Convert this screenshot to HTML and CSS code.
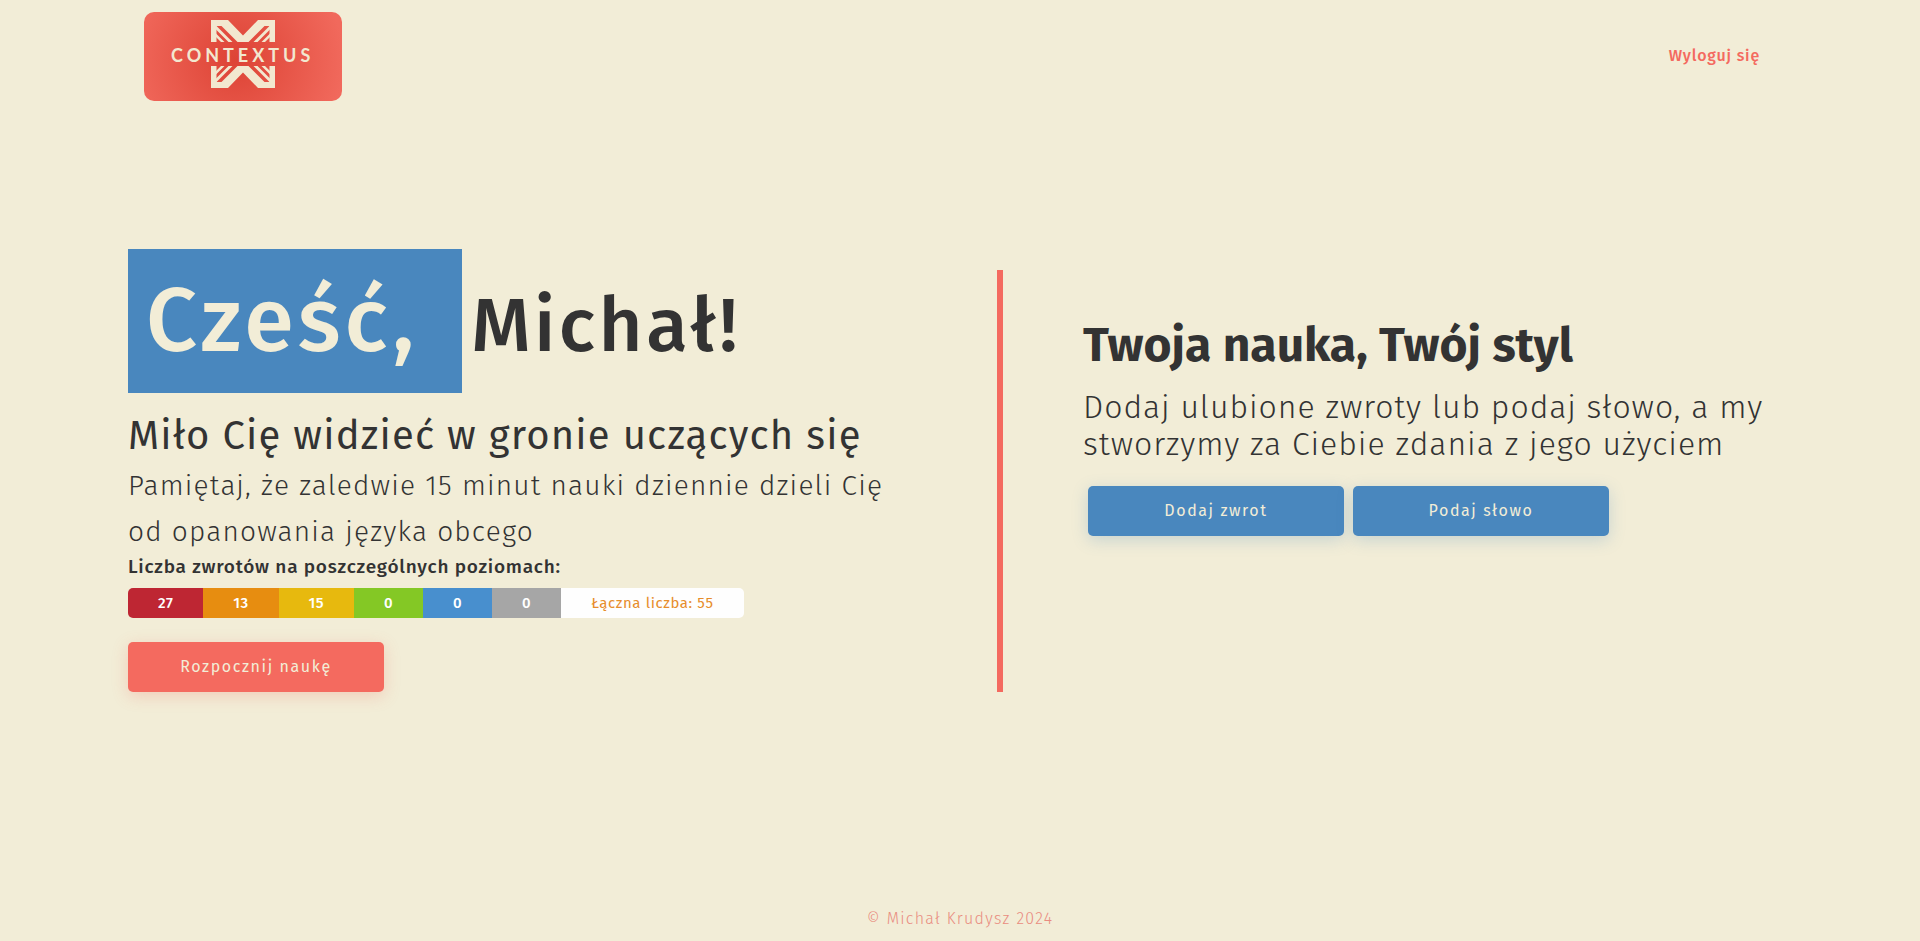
FILE: index.html
```html
<!DOCTYPE html>
<html lang="pl">
<head>
<meta charset="utf-8">
<meta name="viewport" content="width=device-width, initial-scale=1">
<title>Contextus</title>
<link rel="stylesheet" href="styles.css">
</head>
<body>
<header class="header">
  <a class="logo" href="#" aria-label="Contextus">
    <svg width="198" height="89" viewBox="0 0 198 89" aria-hidden="true">
      <defs>
        <radialGradient id="glow" gradientUnits="userSpaceOnUse" cx="92" cy="48" r="108">
          <stop offset="0" stop-color="#dd4335"/>
          <stop offset="1" stop-color="#f1695c"/>
        </radialGradient>
        <g id="half">
          <path d="M67 8H84L99 23.500V30H93.500L77.500 14H72.500V30H67Z"/>
          <path d="M72 13.500L88.500 30H84.500L72 17.500ZM72 21.500L80.500 30H77L72 25Z"/>
        </g>
        <g id="mark">
          <use href="#half"/>
          <use href="#half" transform="translate(198 0) scale(-1 1)"/>
        </g>
      </defs>
      <rect width="198" height="89" rx="10" fill="url(#glow)"/>
      <g fill="#f2e8d0">
        <use href="#mark"/>
        <use href="#mark" transform="translate(0 84) scale(1 -1)"/>
        <text class="logo-text" x="27" y="50">CONTEXTUS</text>
      </g>
    </svg>
  </a>
  <nav><a class="nav-link" href="#">Wyloguj się</a></nav>
</header>
<main class="main">
  <section class="welcome">
    <h1 class="greeting"><span class="hello">Cześć,</span><span>Michał!</span></h1>
    <h2 class="lead">Miło Cię widzieć w gronie uczących się</h2>
    <p class="reminder">Pamiętaj, że zaledwie 15 minut nauki dziennie dzieli Cię od opanowania języka obcego</p>
    <p class="levels-title">Liczba zwrotów na poszczególnych poziomach:</p>
    <ul class="levels">
      <li class="level level-1">27</li>
      <li class="level level-2">13</li>
      <li class="level level-3">15</li>
      <li class="level level-4">0</li>
      <li class="level level-5">0</li>
      <li class="level level-6">0</li>
      <li class="level total">Łączna liczba: 55</li>
    </ul>
    <button class="button button-coral" type="button">Rozpocznij naukę</button>
  </section>
  <section class="learning">
    <h2 class="style-title">Twoja nauka, Twój styl</h2>
    <p class="style-text">Dodaj ulubione zwroty lub podaj słowo, a my stworzymy za Ciebie zdania z jego użyciem</p>
    <div class="actions">
      <button class="button button-blue" type="button">Dodaj zwrot</button>
      <button class="button button-blue" type="button">Podaj słowo</button>
    </div>
  </section>
</main>
<footer class="footer">© Michał Krudysz 2024</footer>
</body>
</html>
```
FILE: styles.css
```css
* {
  box-sizing: border-box;
  margin: 0;
  padding: 0;
}

body {
  display: flex;
  flex-direction: column;
  min-height: 100vh;
  padding: 0 128px;
  background: #f2edd7;
  color: #333;
  font-family: "Fira Sans", "Open Sans", "Noto Sans", sans-serif;
  font-size: 16px;
}

.header {
  display: flex;
  align-items: center;
  justify-content: space-between;
  padding: 12px 16px 0;
}

.logo,
.logo svg {
  display: block;
}

.logo-text {
  font-family: Lato, sans-serif;
  font-size: 18px;
  font-weight: 700;
  letter-spacing: 4px;
}

.nav-link {
  display: block;
  padding: 0 16px 2px;
  color: #f46a5f;
  font-weight: 500;
  letter-spacing: 0.05em;
  text-decoration: none;
}

.main {
  display: grid;
  grid-template-columns: 875fr 789fr;
  flex: 1;
  align-items: start;
  padding-top: 169px;
}

.welcome {
  border-right: 6px solid #f46a5f;
}

.greeting {
  display: flex;
  align-items: baseline;
  gap: 9px;
  margin-top: -21px;
  font-size: 76px;
  font-weight: 500;
  letter-spacing: 0.045em;
  white-space: nowrap;
}

.hello {
  padding: 0 44px 0 18px;
  background: #4987be;
  color: #f2edd7;
  font-size: 90px;
  letter-spacing: 4px;
  line-height: 144px;
}

.lead {
  margin-top: 16px;
  font-size: 40px;
  font-weight: 400;
  letter-spacing: 0.03em;
  line-height: 54px;
}

.reminder {
  max-width: 780px;
  font-size: 28px;
  font-weight: 300;
  letter-spacing: 0.043em;
  line-height: 46px;
}

.levels-title {
  font-size: 19px;
  font-weight: 500;
  letter-spacing: 0.04em;
  line-height: 24px;
}

.levels {
  display: flex;
  width: fit-content;
  margin-top: 9px;
  overflow: hidden;
  border-radius: 5px;
  list-style: none;
}

.level {
  padding: 0 30px;
  color: #fff;
  font-size: 15px;
  font-weight: 500;
  letter-spacing: 0.03em;
  line-height: 30px;
  text-align: center;
}

.level-1 { background: #be2633; }
.level-2 { background: #e78d10; }
.level-3 { background: #e7b90e; }
.level-4 { background: #84c825; }
.level-5 { background: #488fce; }
.level-6 { background: #a6a6a6; }

.total {
  background: #fefefe;
  color: #e78d2b;
  font-weight: 400;
  letter-spacing: 0.04em;
}

.button {
  width: 256px;
  height: 50px;
  padding-bottom: 2px;
  border: 0;
  border-radius: 5px;
  color: #f2edd7;
  font: inherit;
  letter-spacing: 0.1em;
  cursor: pointer;
}

.button-coral {
  display: block;
  margin-top: 24px;
  background: #f46a5f;
  box-shadow: 0 4px 16px rgba(244, 106, 95, 0.25);
}

.button-blue {
  background: #4987be;
  box-shadow: 0 4px 16px rgba(73, 135, 190, 0.25);
}

.learning {
  padding: 45px 0 0 80px;
}

.style-title {
  font-size: 48px;
  font-weight: 700;
  line-height: 60px;
}

.style-text {
  margin-top: 14px;
  font-size: 32px;
  font-weight: 300;
  letter-spacing: 0.03em;
  line-height: 37px;
}

.actions {
  display: flex;
  gap: 9px;
  margin: 23px 0 0 5px;
}

.footer {
  padding-bottom: 11px;
  color: #e98c80;
  font-weight: 300;
  letter-spacing: 0.08em;
  line-height: 22px;
  text-align: center;
}
```
